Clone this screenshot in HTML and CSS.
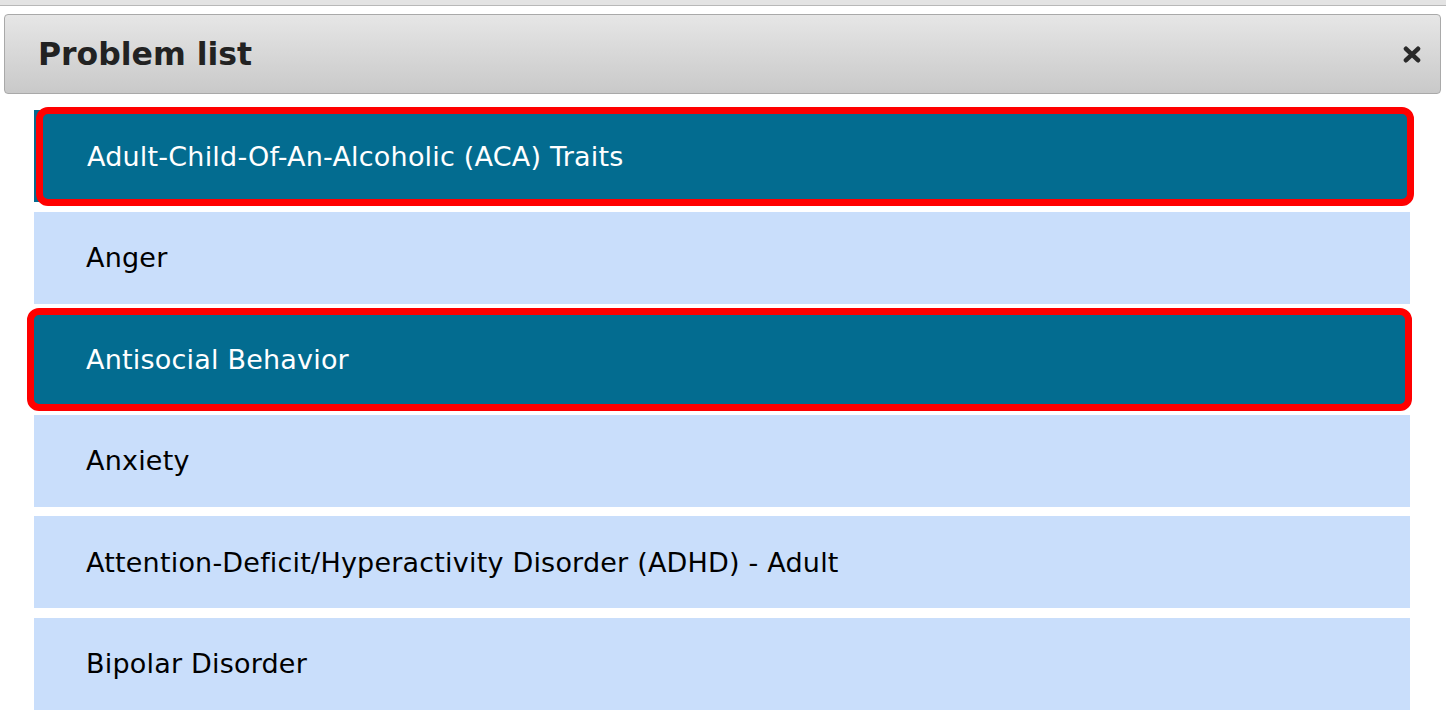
FILE: index.html
```html
<!DOCTYPE html>
<html>
<head>
<meta charset="utf-8">
<link rel="stylesheet" href="styles.css">
</head>
<body>
<div class="topbar"></div>
<div class="dialog-head">
  <h1 class="title">Problem list</h1>
  <button class="close" aria-label="Close">
    <svg width="18" height="17" viewBox="0 0 18 17"><path d="M3 2.8 L15 14.2 M15 2.8 L3 14.2" stroke="#2a2a2a" stroke-width="4.6" stroke-linecap="round"/></svg>
  </button>
</div>
<ul class="problems">
  <li class="item selected sel-first">Adult-Child-Of-An-Alcoholic (ACA) Traits</li>
  <li class="item">Anger</li>
  <li class="item selected sel-second">Antisocial Behavior</li>
  <li class="item">Anxiety</li>
  <li class="item">Attention-Deficit/Hyperactivity Disorder (ADHD) - Adult</li>
  <li class="item">Bipolar Disorder</li>
</ul>
</body>
</html>
```
FILE: styles.css
```css
html, body {
  margin: 0;
  padding: 0;
  background: #ffffff;
  overflow: hidden;
  font-family: "DejaVu Sans", Verdana, sans-serif;
}
.topbar {
  height: 5px;
  background: #e3e3e3;
  border-bottom: 1px solid #b8b8b8;
}
.dialog-head {
  margin: 8px 5px 0 4px;
  height: 78px;
  border: 1px solid #a9a9a9;
  border-radius: 4px;
  background: linear-gradient(#e6e6e6, #c9c9c9);
  display: flex;
  align-items: center;
  justify-content: space-between;
  padding: 0 19px 0 33px;
}
.title {
  margin: 0;
  font-size: 31.5px;
  font-weight: bold;
  color: #222222;
}
.close {
  border: 0;
  background: transparent;
  padding: 0;
  display: flex;
  margin-top: 1px;
}
.problems {
  list-style: none;
  margin: 16px 0 0 34px;
  padding: 0;
  width: 1376px;
  display: flex;
  flex-direction: column;
  gap: 9.6px;
}
.item {
  position: relative;
  height: 92px;
  display: flex;
  align-items: center;
  padding-left: 52px;
  background: #c9defb;
  color: #000000;
  font-size: 27px;
  letter-spacing: 0.2px;
}
.item.selected {
  background: #036c90;
  color: #ffffff;
}
.item.selected::after {
  content: "";
  position: absolute;
  border: 7px solid #ff0000;
  border-radius: 12px;
}
.sel-first {
  padding-left: 53px;
}
.sel-first::after {
  top: -3px;
  bottom: -4px;
  left: 2px;
  right: -4px;
}
.sel-second::after {
  top: -5px;
  bottom: -6px;
  left: -7px;
  right: -2px;
  border-width: 8px;
}
```
